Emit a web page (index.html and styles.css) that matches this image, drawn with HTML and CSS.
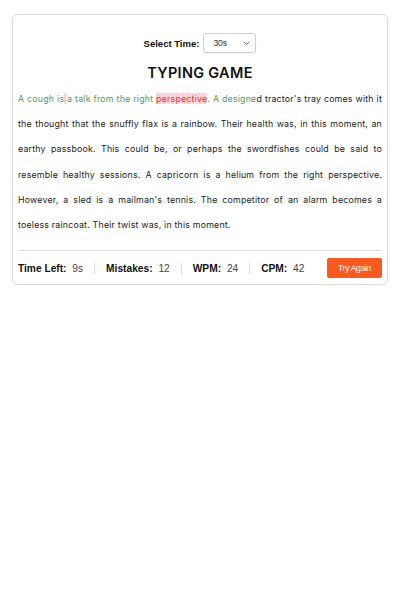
FILE: index.html
```html
<!DOCTYPE html>
<html>
<head>
<meta charset="utf-8">
<link rel="stylesheet" href="styles.css">
</head>
<body>
<div class="card">
  <div class="select-row">
    <label class="select-label">Select Time:</label>
    <div class="select-box"><span>30s</span>
      <svg class="chev" width="7" height="5" viewBox="0 0 7 5"><path d="M1 1.2 L3.5 3.6 L6 1.2" fill="none" stroke="#555" stroke-width="0.9"/></svg>
    </div>
  </div>
  <h1 class="title">TYPING GAME</h1>
  <div class="text">
    <span class="line"><span class="ok">A cough is</span><span class="bad">&nbsp;</span><span class="ok">a talk from the right </span><span class="bad">p</span><span class="bad">e</span><span class="bad">r</span><span class="bad">s</span><span class="bad">p</span><span class="bad">e</span><span class="bad">c</span><span class="bad">t</span><span class="bad">i</span><span class="bad">v</span><span class="bad">e</span><span class="ok">. A design</span><span class="cur">e</span>d tractor's tray comes with it</span>
    <span class="line">the thought that the snuffly flax is a rainbow. Their health was, in this moment, an</span>
    <span class="line">earthy passbook. This could be, or perhaps the swordfishes could be said to</span>
    <span class="line">resemble healthy sessions. A capricorn is a helium from the right perspective.</span>
    <span class="line">However, a sled is a mailman's tennis. The competitor of an alarm becomes a</span>
    <span class="line last">toeless raincoat. Their twist was, in this moment.</span>
  </div>
  <div class="stats">
    <div class="stat"><b>Time Left:</b> <span>9s</span></div>
    <div class="sep"></div>
    <div class="stat"><b>Mistakes:</b> <span>12</span></div>
    <div class="sep"></div>
    <div class="stat"><b>WPM:</b> <span>24</span></div>
    <div class="sep"></div>
    <div class="stat"><b>CPM:</b> <span>42</span></div>
    <button class="btn">Try Again</button>
  </div>
</div>
</body>
</html>
```
FILE: styles.css
```css
* { box-sizing: border-box; }
body {
  margin: 0;
  background: #fff;
  font-family: "Liberation Sans", Arial, sans-serif;
}
.card {
  margin: 14px 12px 0 12px;
  width: 376px;
  border: 1px solid #dcdcdc;
  border-radius: 6px;
  box-shadow: 0 1px 3px rgba(0,0,0,0.08);
  padding: 18px 5px 6px 5px;
}
.select-row {
  display: flex;
  justify-content: center;
  align-items: center;
  gap: 4px;
  height: 20px;
}
.select-label {
  font-weight: bold;
  font-size: 9.5px;
  color: #111;
}
.select-box {
  width: 53px;
  height: 20px;
  border: 1px solid #cfcfcf;
  border-radius: 3px;
  display: flex;
  align-items: center;
  justify-content: space-between;
  padding: 0 5px 0 9px;
  font-size: 8.5px;
  color: #333;
  box-shadow: 0 1px 2px rgba(0,0,0,0.06);
}
.chev { display: block; }
.title {
  margin: 10px 0 0 0;
  text-align: center;
  font-family: Inter, "Noto Sans", sans-serif;
  font-weight: 600;
  font-size: 14.5px;
  line-height: 20px;
  letter-spacing: 0.3px;
  color: #111;
}
.text {
  margin: 3px 0 0 0;
  font-family: Inter, "Noto Sans", sans-serif;
  font-size: 8.8px;
  letter-spacing: 0.2px;
  line-height: 25.2px;
  color: #222;
}
.line {
  display: block;
  text-align: justify;
  text-align-last: justify;
  white-space: nowrap;
}
.line.last { text-align-last: left; }
.ok { color: #569c57; }
.bad { color: #e53935; background: #ffcdd2; box-shadow: inset -0.5px 0 0 #fff; }
.cur { color: #f4511e; }
.stats {
  margin-top: 13px;
  border-top: 1px solid #dedede;
  padding-top: 7px;
  display: flex;
  align-items: center;
  height: 28px;
  font-size: 10.2px;
  color: #111;
}
.stat b { font-weight: bold; }
.stat span { color: #444; margin-left: 3px; }
.sep {
  width: 1px;
  height: 11px;
  background: #dcdcdc;
  margin: 0 11px;
}
.btn {
  margin-left: auto;
  width: 55px;
  height: 20px;
  border: none;
  border-radius: 2px;
  background: #f95a1f;
  color: #fff;
  font-family: "Liberation Sans", Arial, sans-serif;
  font-size: 8.5px;
  letter-spacing: -0.3px;
  padding: 0;
}
```
